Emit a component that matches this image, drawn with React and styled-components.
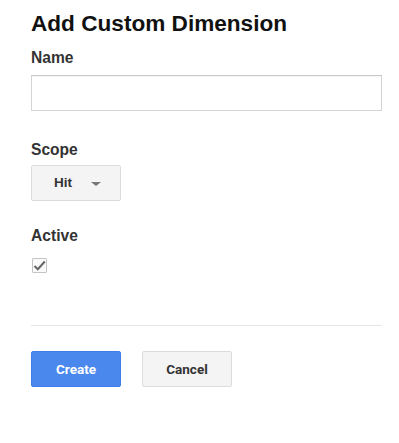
import styled, { createGlobalStyle } from 'styled-components';

const GlobalStyle = createGlobalStyle`
  body {
    margin: 0;
    background: #ffffff;
    font-family: 'Liberation Sans', Arial, sans-serif;
  }
`;

const Page = styled.main`
  display: flex;
  flex-direction: column;
  align-items: flex-start;
  padding: 11px 17px 0 31px;
  width: 399px;
  box-sizing: border-box;
`;

const Title = styled.h1`
  margin: 0;
  font-size: 22.6px;
  line-height: 25px;
  font-weight: 700;
  color: #111;
`;

const Label = styled.div`
  margin-top: ${({ $top }) => $top}px;
  font-size: 15.6px;
  line-height: 18px;
  font-weight: 700;
  color: #333;
`;

const TextInput = styled.input`
  margin-top: 7.5px;
  width: 351px;
  height: 36px;
  box-sizing: border-box;
  border: 1px solid #d4d4d4;
  border-top-color: #c8c8c8;
  box-shadow: inset 0 1px 1px rgba(0, 0, 0, 0.04);
  outline: none;
  padding: 0 8px;
  font: inherit;
`;

const Select = styled.div`
  margin-top: 6px;
  width: 90px;
  height: 36px;
  box-sizing: border-box;
  display: flex;
  align-items: center;
  gap: 19px;
  padding-left: 22px;
  background: #f4f4f4;
  border: 1px solid #dcdcdc;
  border-radius: 2px;
  font-size: 13.5px;
  font-weight: 700;
  color: #333;
`;

const Caret = styled.span`
  width: 0;
  height: 0;
  border-left: 5px solid transparent;
  border-right: 5px solid transparent;
  border-top: 4px solid #777;
  margin-top: 2px;
`;

const CheckBox = styled.span`
  margin-top: 12.5px;
  margin-left: 1px;
  width: 15px;
  height: 15px;
  box-sizing: border-box;
  border: 1px solid #c4c4c4;
  border-radius: 1px;
  display: flex;
  align-items: center;
  justify-content: center;
  background: #fafafa;
`;

const Divider = styled.hr`
  margin: 52px 0 0;
  width: 351px;
  border: 0;
  border-top: 1px solid #e6e6e6;
`;

const Actions = styled.div`
  display: flex;
  gap: 21px;
  margin-top: 25px;
`;

const Button = styled.button`
  width: 90px;
  height: 36px;
  box-sizing: border-box;
  border-radius: 2px;
  font-family: Roboto, 'Liberation Sans', sans-serif;
  font-size: 13.5px;
  font-weight: 700;
  cursor: pointer;
  border: 1px solid ${({ $primary }) => ($primary ? '#3f7ee8' : '#dcdcdc')};
  background: ${({ $primary }) => ($primary ? '#4a88ee' : '#f4f4f4')};
  color: ${({ $primary }) => ($primary ? '#ffffff' : '#333333')};
`;

export default function App() {
  return (
    <>
      <GlobalStyle />
      <Page>
        <Title>Add Custom Dimension</Title>
        <Label $top={13}>Name</Label>
        <TextInput type='text' />
        <Label $top={30}>Scope</Label>
        <Select>
          Hit
          <Caret />
        </Select>
        <Label $top={26.5}>Active</Label>
        <CheckBox>
          <svg width='13' height='11' viewBox='0 0 13 11'>
            <path d='M1.5 6 L4.8 9.2 L11.8 1.5' fill='none' stroke='#666' strokeWidth='2' />
          </svg>
        </CheckBox>
        <Divider />
        <Actions>
          <Button $primary>Create</Button>
          <Button>Cancel</Button>
        </Actions>
      </Page>
    </>
  );
}
